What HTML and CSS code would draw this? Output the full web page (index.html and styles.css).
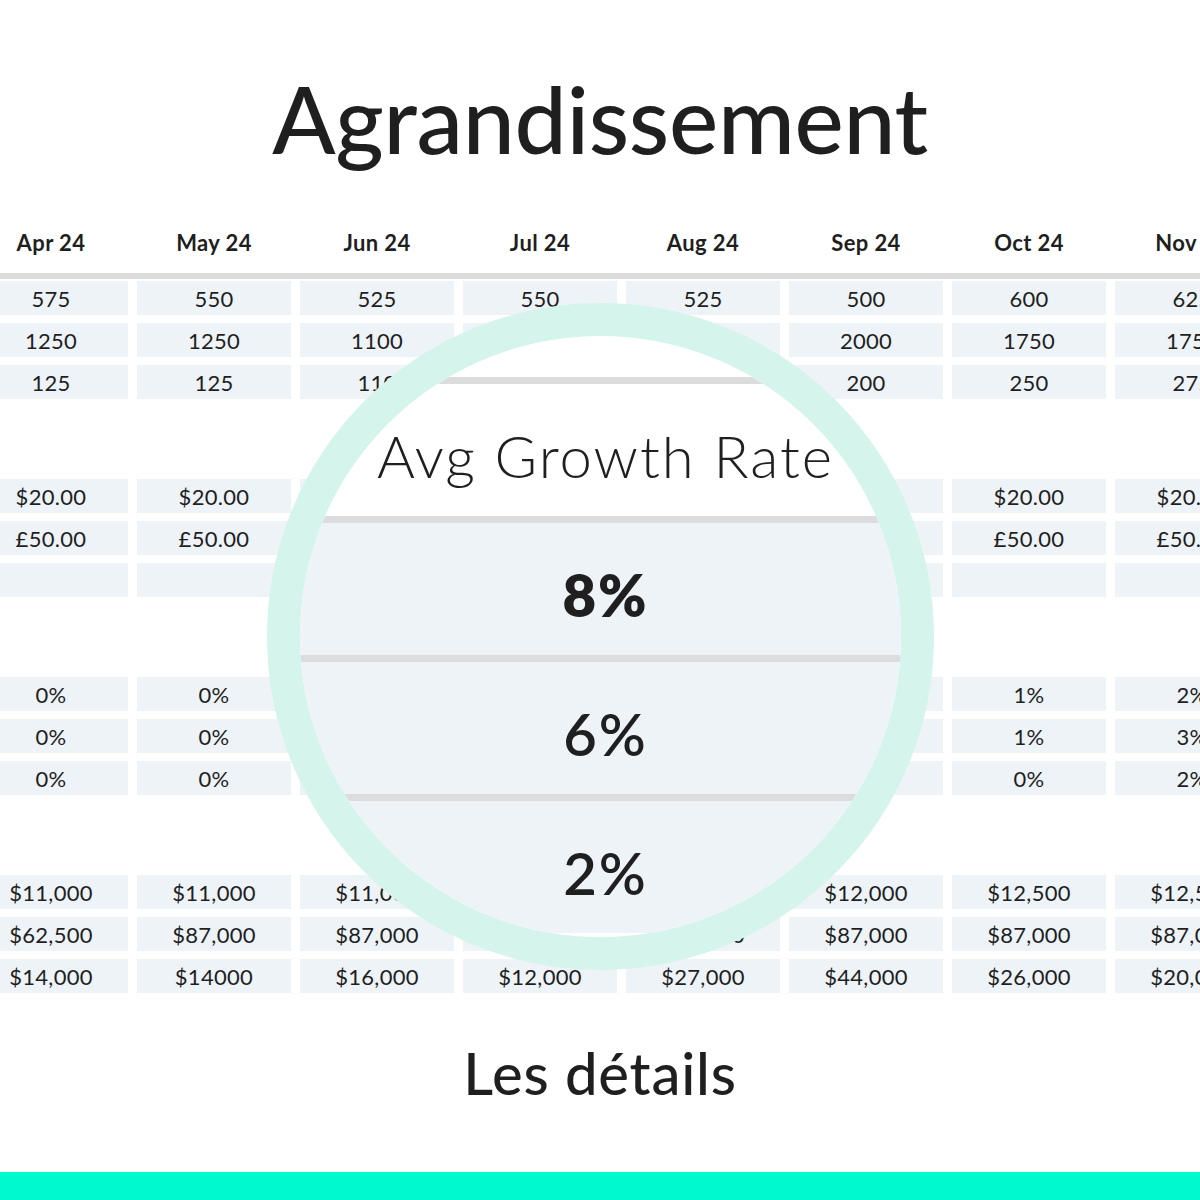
FILE: index.html
```html
<!DOCTYPE html>
<html lang="fr">
<head>
<meta charset="utf-8">
<title>Agrandissement</title>
<link rel="stylesheet" href="styles.css">
</head>
<body>
<div class="page">
  <h1 class="title">Agrandissement</h1>

  <div class="table">
    <div class="head">
      <div class="grid">
        <div class="hcell">Apr 24</div><div class="hcell">May 24</div><div class="hcell">Jun 24</div><div class="hcell">Jul 24</div><div class="hcell">Aug 24</div><div class="hcell">Sep 24</div><div class="hcell">Oct 24</div><div class="hcell">Nov 24</div>
      </div>
    </div>

    <div class="grid group first">
      <div class="cell">575</div><div class="cell">550</div><div class="cell">525</div><div class="cell">550</div><div class="cell">525</div><div class="cell">500</div><div class="cell">600</div><div class="cell">625</div>
      <div class="cell">1250</div><div class="cell">1250</div><div class="cell">1100</div><div class="cell">1250</div><div class="cell">1500</div><div class="cell">2000</div><div class="cell">1750</div><div class="cell">1750</div>
      <div class="cell">125</div><div class="cell">125</div><div class="cell">110</div><div class="cell">125</div><div class="cell">150</div><div class="cell">200</div><div class="cell">250</div><div class="cell">275</div>
    </div>

    <div class="grid group">
      <div class="cell">$20.00</div><div class="cell">$20.00</div><div class="cell">$20.00</div><div class="cell">$20.00</div><div class="cell">$20.00</div><div class="cell">$20.00</div><div class="cell">$20.00</div><div class="cell">$20.00</div>
      <div class="cell">£50.00</div><div class="cell">£50.00</div><div class="cell">£50.00</div><div class="cell">£50.00</div><div class="cell">£50.00</div><div class="cell">£50.00</div><div class="cell">£50.00</div><div class="cell">£50.00</div>
      <div class="cell"></div><div class="cell"></div><div class="cell"></div><div class="cell"></div><div class="cell"></div><div class="cell"></div><div class="cell"></div><div class="cell"></div>
    </div>

    <div class="grid group">
      <div class="cell">0%</div><div class="cell">0%</div><div class="cell">0%</div><div class="cell">0%</div><div class="cell">1%</div><div class="cell">1%</div><div class="cell">1%</div><div class="cell">2%</div>
      <div class="cell">0%</div><div class="cell">0%</div><div class="cell">0%</div><div class="cell">1%</div><div class="cell">1%</div><div class="cell">1%</div><div class="cell">1%</div><div class="cell">3%</div>
      <div class="cell">0%</div><div class="cell">0%</div><div class="cell">0%</div><div class="cell">0%</div><div class="cell">0%</div><div class="cell">0%</div><div class="cell">0%</div><div class="cell">2%</div>
    </div>

    <div class="grid group">
      <div class="cell">$11,000</div><div class="cell">$11,000</div><div class="cell">$11,000</div><div class="cell">$11,500</div><div class="cell">$12,000</div><div class="cell">$12,000</div><div class="cell">$12,500</div><div class="cell">$12,500</div>
      <div class="cell">$62,500</div><div class="cell">$87,000</div><div class="cell">$87,000</div><div class="cell">$87,000</div><div class="cell">$87,000</div><div class="cell">$87,000</div><div class="cell">$87,000</div><div class="cell">$87,000</div>
      <div class="cell">$14,000</div><div class="cell">$14000</div><div class="cell">$16,000</div><div class="cell">$12,000</div><div class="cell">$27,000</div><div class="cell">$44,000</div><div class="cell">$26,000</div><div class="cell">$20,000</div>
    </div>
  </div>

  <h2 class="subtitle">Les détails</h2>
  <div class="bar"></div>

  <div class="magnifier">
    <div class="lens">
      <div class="spacer"></div>
      <div class="mrow mhead">Avg Growth Rate</div>
      <div class="mrow mval strong">8%</div>
      <div class="mrow mval">6%</div>
      <div class="mrow mval">2%</div>
    </div>
  </div>
</div>
</body>
</html>
```

FILE: styles.css
```css
html, body {
  margin: 0;
  padding: 0;
  background: #ffffff;
}

body {
  font-family: Lato, "Noto Sans", "Liberation Sans", sans-serif;
  color: #1f1f1f;
}

.page {
  position: relative;
  width: 1200px;
  height: 1200px;
  overflow: hidden;
}

.title {
  margin: 0;
  padding-top: 72px;
  font-size: 93px;
  line-height: 93px;
  font-weight: 500;
  text-align: center;
  letter-spacing: -0.3px;
}

.table {
  width: 1200px;
  overflow: hidden;
}

.grid {
  display: grid;
  grid-template-columns: repeat(8, 154px);
  column-gap: 9px;
  margin-left: -26px;
  width: 1295px;
}

.head {
  padding-top: 67px;
  padding-bottom: 19px;
  border-bottom: 6px solid #dcdcdc;
}

.hcell {
  font-size: 22px;
  line-height: 22px;
  font-weight: 700;
  text-align: center;
  letter-spacing: 0.4px;
}

.group {
  row-gap: 8px;
  margin-top: 80px;
}

.group.first {
  margin-top: 2px;
}

.cell {
  height: 34px;
  background: #eef3f8;
  font-size: 22px;
  line-height: 36px;
  text-align: center;
  color: #1f1f1f;
  letter-spacing: 0.3px;
}

.subtitle {
  margin: 51px 0 0;
  font-size: 58px;
  line-height: 58px;
  font-weight: 500;
  text-align: center;
  letter-spacing: 0.8px;
}

.bar {
  position: absolute;
  left: 0;
  right: 0;
  bottom: 0;
  height: 28px;
  background: #00fad0;
}

.magnifier {
  position: absolute;
  left: 267px;
  top: 303px;
  width: 667px;
  height: 667px;
  box-sizing: border-box;
  border: 33px solid #d4f4ec;
  border-radius: 50%;
  overflow: hidden;
  background: #ffffff;
}

.lens {
  display: flex;
  flex-direction: column;
}

.spacer {
  height: 41px;
}

.mrow {
  border-top: 7px solid #dcdcdc;
  padding-top: 43px;
  padding-left: 10px;
  height: 89px;
  font-size: 58px;
  line-height: 58px;
  text-align: center;
}

.mhead {
  background: #ffffff;
  font-weight: 300;
  letter-spacing: 2px;
}

.mval {
  background: #eef3f8;
  font-weight: 600;
  letter-spacing: 2px;
}

.mval.strong {
  font-weight: 800;
}
```
